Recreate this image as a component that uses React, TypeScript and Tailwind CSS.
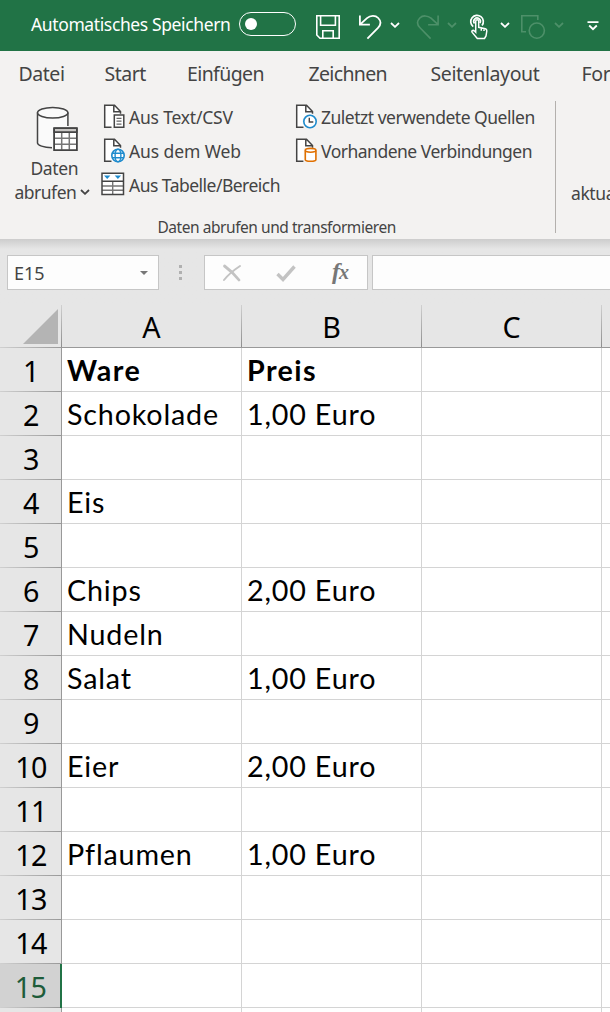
import type { ReactNode } from "react";

const ui = "font-['Noto_Sans','Open_Sans',sans-serif]";

function Chevron({ className }: { className: string }) {
  return (
    <svg viewBox="0 0 10 6" className={`h-[6px] w-[10px] shrink-0 ${className}`} fill="none" stroke="currentColor" strokeWidth="1.8">
      <path d="M1 1l4 3.8L9 1" />
    </svg>
  );
}

function TitleBar() {
  return (
    <header className="flex h-[51px] shrink-0 bg-[#217346] text-white">
      <div className="flex h-12 items-center pl-[31px]">
        <span className="w-[208px] pt-px text-[17.5px] tracking-[-0.38px]">Automatisches Speichern</span>
        <span className="flex h-6 w-[57px] items-center rounded-full border border-white pl-[5px]">
          <span className="size-3 rounded-full bg-white" />
        </span>
      </div>
      <div className="flex h-[51px] items-center pt-[3px]">
        <svg viewBox="0 0 26 26" className="ml-[19px] size-[26px] shrink-0" fill="none" stroke="currentColor" strokeWidth="1.6">
          <path d="M1.8 1.8h22.4v22.4H5L1.8 21z M5.6 1.8v9.4h14.8V1.8 M7.8 24v-7.2h10.4V24" />
        </svg>
        <svg viewBox="0 0 24 26" className="ml-[17px] h-[26px] w-6 shrink-0" fill="none" stroke="currentColor" strokeWidth="1.8">
          <path d="M1.9 1.5v9.2h10 M2.2 10.4L9 4.2c3.4-3 8.5-3 11.2-.2 2.9 3 2.7 6.800-.2 9.800L9.400 24.600" />
        </svg>
        <Chevron className="ml-[8px] mt-[-4px]" />
        <svg viewBox="0 0 24 26" className="ml-[16px] h-[26px] w-6 shrink-0 -scale-x-100 text-[#4d9069]" fill="none" stroke="currentColor" strokeWidth="1.6">
          <path d="M1.9 1.5v9.2h10 M2.2 10.4L9 4.2c3.4-3 8.5-3 11.2-.2 2.9 3 2.7 6.800-.2 9.800L9.400 24.600" />
        </svg>
        <Chevron className="ml-[7px] mt-[-4px] text-[#4d9069]" />
        <svg viewBox="0 0 20 26" className="ml-[12px] h-[26px] w-5 shrink-0" fill="none" stroke="currentColor" strokeWidth="1.7">
          <path d="M4.2 12.6A6.300 6.300 0 1 1 13 11.500" />
          <path d="M5.500 9.500a3.300 3.300 0 1 1 5.400-.4" />
          <path d="M6.700 17.500V7.300c0-2 3-2 3 0v6l6.600 1.500c1.300.4 1.600 1 1.500 2.200l-.8 5-1.500 2.500H8.300L3.200 18.400c-1.100-1.500.7-2.600 2-1.600l1.500 1.500z M12.300 13.800v3 M15 14.500v2.600" strokeWidth="1.5" />
        </svg>
        <Chevron className="ml-[11px] mt-[-4px]" />
        <svg viewBox="0 0 26 26" className="ml-[10px] size-[26px] shrink-0 text-[#4d9069]" fill="none" stroke="currentColor" strokeWidth="1.6">
          <path d="M6 17.800H1.800V1.800h16V6" />
          <circle cx="16.800" cy="16.600" r="7.600" />
        </svg>
        <Chevron className="ml-[8px] mt-[-4px] text-[#4d9069]" />
        <svg viewBox="0 0 12 10" className="ml-[23px] mt-[-3px] h-[10px] w-3 shrink-0" fill="none" stroke="currentColor" strokeWidth="1.8">
          <path d="M.5 1.200h11 M2.200 4.500L6 8.200l3.800-3.700" />
        </svg>
      </div>
    </header>
  );
}

function Tabs() {
  return (
    <nav className="flex h-[46px] shrink-0 items-center overflow-hidden pl-[18.5px] text-[19.5px] whitespace-nowrap">
      <span className="w-[86px] shrink-0 tracking-[-0.45px]">Datei</span>
      <span className="w-[82.5px] shrink-0 tracking-[-0.5px]">Start</span>
      <span className="w-[121.5px] shrink-0 tracking-[-0.6px]">Einfügen</span>
      <span className="w-[122px] shrink-0 tracking-[-0.65px]">Zeichnen</span>
      <span className="w-[151px] shrink-0 tracking-[-0.4px]">Seitenlayout</span>
      <span className="shrink-0 tracking-[-0.3px]">Formeln</span>
    </nav>
  );
}

function DocIcon({ children }: { children: ReactNode }) {
  return (
    <svg viewBox="0 0 22 25" className="h-[25px] w-[22px] shrink-0" fill="none">
      <path d="M1.7 1.2h9.8l5.8 6V23.300H1.700z" fill="#fff" />
      <path d="M8.500 23.300H1.700V1.200h9.800l6 6.300v2.200 M10.800 1.200v6.600h6.500" stroke="#444" strokeWidth="1.5" />
      {children}
    </svg>
  );
}

function DatabaseIcon() {
  return (
    <svg viewBox="0 0 42 46" className="h-[46px] w-[42px]" fill="none" stroke="#444" strokeWidth="1.5">
      <path d="M1.500 6.500V37c0 3 7 4.800 15 4.800h1.500V22h14V6.500z" fill="#fafafa" stroke="none" />
      <ellipse cx="16.700" cy="6.700" rx="15.200" ry="5.300" fill="#fafafa" />
      <path d="M1.500 6.500V37c0 2.300 6 4.500 14.500 4.800 M31.900 6.500v13.500" />
      <path d="M18.200 22.300h22.600v22H18.200z" fill="#fff" />
      <path d="M18.200 22.300h22.600v4H18.200z" fill="#c8c6c4" />
      <path d="M18.200 32.300h22.600 M18.200 38.300h22.600 M25.700 26.300v18 M33.300 26.300v18" stroke="#777" />
      <path d="M18.200 22.300h22.600v22H18.200z M18.200 26.300h22.600" />
    </svg>
  );
}

function Command({ icon, children, className }: { icon: ReactNode; children: ReactNode; className: string }) {
  return (
    <div className="flex h-[34px] items-center">
      {icon}
      <span className={`whitespace-nowrap ${className}`}>{children}</span>
    </div>
  );
}

function Ribbon() {
  return (
    <section className="flex h-[142px] shrink-0 overflow-hidden text-[17.5px]">
      <div className="flex w-[555px] shrink-0 flex-col">
        <div className="flex h-[119px] shrink-0 pt-[3px]">
          <div className="flex w-[101px] shrink-0 flex-col pt-[6px]">
            <div className="h-[46px] pl-[36px]"><DatabaseIcon /></div>
            <span className="mt-1 pl-[30.5px] leading-6 tracking-[-0.4px]">Daten</span>
            <span className="flex items-center pl-[14.5px] leading-6 tracking-[-0.5px]">abrufen<Chevron className="ml-1" /></span>
          </div>
          <div className="w-[194px] shrink-0">
            <Command className="ml-1 tracking-[-0.2px]" icon={<span className="pb-[2px] pl-[2px]"><DocIcon>
              <path d="M11.300 11h9.500v12.300h-9.500z" fill="#fff" stroke="#444" strokeWidth="1.5" />
              <path d="M13.500 14.300h5 M13.500 17.200h5 M13.500 20.100h5" stroke="#666" strokeWidth="1.2" />
            </DocIcon></span>}>Aus Text/CSV</Command>
            <Command className="ml-1 tracking-[-0.1px]" icon={<span className="pb-[2px] pl-[2px]"><DocIcon>
              <circle cx="15" cy="17.5" r="7.3" fill="#f3f2f1" />
              <g stroke="#1e8bcd" strokeWidth="1.4">
                <circle cx="15" cy="17.5" r="6.2" fill="#fff" strokeWidth="1.6" />
                <ellipse cx="15" cy="17.5" rx="2.9" ry="6.2" />
                <path d="M9.300 15.300h11.400 M9.300 19.700h11.400" />
              </g>
            </DocIcon></span>}>Aus dem Web</Command>
            <Command className="ml-1 tracking-[-0.52px]" icon={<svg viewBox="0 0 24 24" className="mt-[-3px] size-6 shrink-0" fill="none">
              <path d="M1 1.300h21.500v21.200H1z" fill="#fff" />
              <path d="M1 14h21.500 M1 18.300h21.500 M11.700 9v13.500" stroke="#777" strokeWidth="1.4" />
              <path d="M1 1.300h21.500v21.200H1z M1 9.200h21.500" stroke="#444" strokeWidth="1.5" />
              <path d="M3 3.400h6.400L6.200 6.900z M13.700 3.400h6.400l-3.200 3.500z" fill="#1e8bcd" />
            </svg>}>Aus Tabelle/Bereich</Command>
          </div>
          <div className="shrink-0">
            <Command className="ml-1 tracking-[-0.49px]" icon={<span className="pb-[2px]"><DocIcon>
              <circle cx="15" cy="17.5" r="7.5" fill="#f3f2f1" />
              <circle cx="15" cy="17.5" r="6.2" fill="#fff" stroke="#1e8bcd" strokeWidth="1.6" />
              <path d="M14.300 13.800v4.200h4" stroke="#444" strokeWidth="1.4" />
            </DocIcon></span>}>Zuletzt verwendete Quellen</Command>
            <Command className="ml-1 tracking-[-0.5px]" icon={<span className="pb-[2px]"><DocIcon>
              <path d="M8.800 10h13v14.500h-13z" fill="#f3f2f1" />
              <path d="M10.300 12.500v9.300c0 2 10.600 2 10.600 0v-9.300" fill="#fff" stroke="#e07000" strokeWidth="1.6" />
              <ellipse cx="15.6" cy="12.3" rx="5.3" ry="1.9" fill="#fff" stroke="#e07000" strokeWidth="1.6" />
            </DocIcon></span>}>Vorhandene Verbindungen</Command>
          </div>
        </div>
        <span className="pl-[157.5px] text-[15.5px] leading-[23px] tracking-[-0.45px]">Daten abrufen und transformieren</span>
      </div>
      <div className="mt-1 flex h-[132px] shrink-0 border-l border-[#b3b0ad] pt-[80px] pl-[15px] leading-6 tracking-[-0.4px]">aktualisieren</div>
    </section>
  );
}

function FormulaBar() {
  return (
    <section className="h-[66px] shrink-0 bg-[#e6e6e6] bg-linear-to-b from-[#cdcdcd] to-[#e6e6e6] to-[10px] pt-4">
      <div className="flex h-[35px] pl-[7px]">
        <div className="flex w-[152px] items-center justify-between border border-[#c6c6c6] bg-[#fdfdfd] pr-[10px] pl-[6px] text-[18px]">
          <span className="pt-px">E15</span>
          <svg viewBox="0 0 8 4" className="h-1 w-2" fill="#777"><path d="M0 0h8L4 4z" /></svg>
        </div>
        <div className="flex w-[45px] flex-col items-center justify-center gap-[3px] pr-[2px]">
          <i className="size-[3px] bg-[#b0b0b0]" />
          <i className="size-[3px] bg-[#b0b0b0]" />
          <i className="size-[3px] bg-[#b0b0b0]" />
        </div>
        <div className="flex w-[164px] items-center border border-[#c6c6c6] bg-[#fdfdfd] pl-[17px]">
          <svg viewBox="0 0 20 18" className="h-[18px] w-5" fill="none" stroke="#c3c3c3" strokeLinecap="round">
            <path d="M2.500 2C8 6 13 11 17 16" strokeWidth="2.8" />
            <path d="M18 2C12 6 6 11 2 16" strokeWidth="2" />
          </svg>
          <svg viewBox="0 0 20 18" className="ml-[34px] h-[18px] w-5" fill="none" stroke="#c3c3c3">
            <path d="M1.500 10l5.500 5.500L18.500 2.500" strokeWidth="3.4" />
          </svg>
          <span className="ml-[36px] pb-[3px] font-['Liberation_Serif',serif] text-[24px] leading-none font-bold tracking-[-1px] text-[#777] italic">
            f<span className="text-[20px]">x</span>
          </span>
        </div>
        <div className="ml-1 flex-1 border border-r-0 border-[#c6c6c6] bg-[#fdfdfd]" />
      </div>
    </section>
  );
}

const columns = ["A", "B", "C"];

const rows: [string, string][] = [
  ["Ware", "Preis"],
  ["Schokolade", "1,00 Euro"],
  ["", ""],
  ["Eis", ""],
  ["", ""],
  ["Chips", "2,00 Euro"],
  ["Nudeln", ""],
  ["Salat", "1,00 Euro"],
  ["", ""],
  ["Eier", "2,00 Euro"],
  ["", ""],
  ["Pflaumen", "1,00 Euro"],
  ["", ""],
  ["", ""],
  ["", ""],
];

const rule = "w-px shrink-0 bg-linear-to-b from-[#d0d0d0] to-[#8e8e8e]";

function Sheet() {
  return (
    <main className="min-h-0 flex-1 overflow-hidden bg-white text-black">
      <div className="flex h-[42px] bg-[#e6e6e6] text-[28.7px]">
        <div className="flex w-[61px] shrink-0 items-end justify-end pr-[3px] pb-[3px]">
          <svg viewBox="0 0 35 35" className="size-[35px]" fill="#b4b4b4"><path d="M35 0v35H0z" /></svg>
        </div>
        <div className={rule} />
        {columns.map((c) => (
          <div key={c} className="flex w-[180px] shrink-0">
            <span className="flex-1 text-center leading-[44px]">{c}</span>
            <div className={rule} />
          </div>
        ))}
      </div>
      <div className="h-px bg-[#999] bg-linear-to-r from-[#d0d0d0] to-[#999] to-[61px]" />
      {rows.map(([a, b], i) => {
        const active = i === 14;
        const weight = i === 0 ? "font-bold tracking-[1.4px]" : "tracking-[0.82px]";
        return (
          <div key={i} className="flex h-11 font-['Lato',sans-serif] text-[28.7px]">
            <div className={`flex w-[62px] shrink-0 flex-col ${active ? "border-r-2 border-[#217346] bg-[#d2d2d2] text-[#1e5c3a]" : "border-r border-[#999] bg-[#e6e6e6]"}`}>
              <span className={`h-[43px] pl-px text-center leading-[45px] tracking-[-0.6px] ${ui}`}>{i + 1}</span>
              <div className="h-px bg-linear-to-r from-[#d0d0d0] to-[#999]" />
            </div>
            <div className={`w-[180px] shrink-0 border-r border-b border-[#d4d4d4] pl-[5px] leading-[45px] whitespace-nowrap ${weight}`}>{a}</div>
            <div className={`w-[180px] shrink-0 border-r border-b border-[#d4d4d4] pl-[5px] leading-[45px] whitespace-nowrap ${weight}`}>{b}</div>
            <div className="w-[180px] shrink-0 border-r border-b border-[#d4d4d4]" />
            <div className="flex-1 border-b border-[#d4d4d4]" />
          </div>
        );
      })}
      <div className="flex h-11">
        <div className="w-[62px] shrink-0 border-r border-[#999] bg-[#e6e6e6]" />
        <div className="w-[180px] shrink-0 border-r border-[#d4d4d4]" />
        <div className="w-[180px] shrink-0 border-r border-[#d4d4d4]" />
        <div className="w-[180px] shrink-0 border-r border-[#d4d4d4]" />
      </div>
    </main>
  );
}

export default function App() {
  return (
    <div className={`flex h-[1012px] w-[610px] flex-col overflow-hidden bg-[#f3f2f1] text-[#444] ${ui}`}>
      <TitleBar />
      <Tabs />
      <Ribbon />
      <FormulaBar />
      <Sheet />
    </div>
  );
}
